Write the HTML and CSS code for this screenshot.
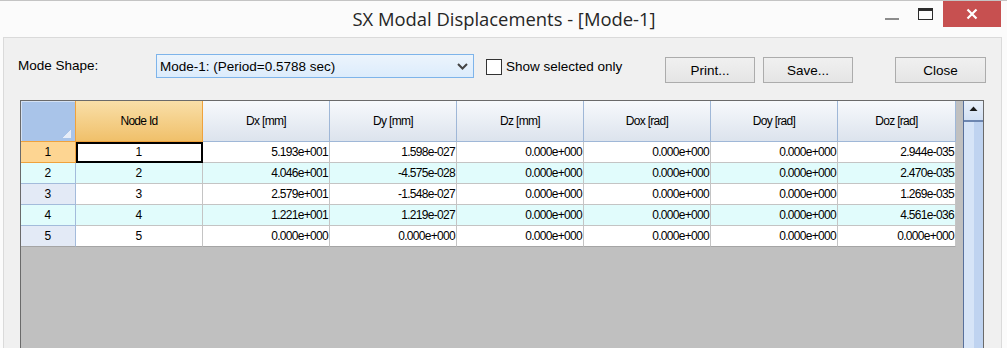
FILE: index.html
```html
<!DOCTYPE html>
<html lang="en">
<head>
    <meta charset="UTF-8">
    <title>SX Modal Displacements - [Mode-1]</title>
    <link rel="stylesheet" href="styles.css">
</head>
<body>

<div class="window">
    <div class="titlebar">
        <div></div>
        <div class="title">SX Modal Displacements - [Mode-1]</div>
        <div class="win-controls">
            <span class="wc-min"></span>
            <span class="wc-max"></span>
            <span class="wc-close">
                <svg width="12" height="12" viewBox="0 0 12 12"><path d="M1.5 1.5 L10.5 10.5 M10.5 1.5 L1.5 10.5" stroke="#fff" stroke-width="2.2" fill="none"/></svg>
            </span>
        </div>
    </div>

    <div class="client">
        <div class="toolbar">
            <div class="field-label">Mode Shape:</div>
            <div class="combo">
                <span>Mode-1: (Period=0.5788 sec)</span>
                <svg class="combo-arrow" width="11" height="7" viewBox="0 0 11 7"><path d="M1 1 L5.5 5.5 L10 1" stroke="#444" stroke-width="2" fill="none"/></svg>
            </div>
            <label class="check">
                <span class="check-box"></span>
                <span>Show selected only</span>
            </label>
            <button class="btn">Print...</button>
            <button class="btn btn-save">Save...</button>
            <button class="btn btn-close">Close</button>
        </div>

        <div class="grid-box">
            <div class="grid-area">
                <table class="grid">
                    <thead>
                        <tr>
                            <th class="corner"></th>
                            <th class="col-sel">Node Id</th>
                            <th>Dx [mm]</th>
                            <th>Dy [mm]</th>
                            <th>Dz [mm]</th>
                            <th>Dox [rad]</th>
                            <th>Doy [rad]</th>
                            <th class="col-last">Doz [rad]</th>
                        </tr>
                    </thead>
                    <tbody>
                        <tr class="sel">
                            <td class="rh">1</td>
                            <td class="id cur">1</td>
                            <td>5.193e+001</td>
                            <td>1.598e-027</td>
                            <td>0.000e+000</td>
                            <td>0.000e+000</td>
                            <td>0.000e+000</td>
                            <td>2.944e-035</td>
                        </tr>
                        <tr class="alt">
                            <td class="rh">2</td>
                            <td class="id">2</td>
                            <td>4.046e+001</td>
                            <td>-4.575e-028</td>
                            <td>0.000e+000</td>
                            <td>0.000e+000</td>
                            <td>0.000e+000</td>
                            <td>2.470e-035</td>
                        </tr>
                        <tr>
                            <td class="rh">3</td>
                            <td class="id">3</td>
                            <td>2.579e+001</td>
                            <td>-1.548e-027</td>
                            <td>0.000e+000</td>
                            <td>0.000e+000</td>
                            <td>0.000e+000</td>
                            <td>1.269e-035</td>
                        </tr>
                        <tr class="alt">
                            <td class="rh">4</td>
                            <td class="id">4</td>
                            <td>1.221e+001</td>
                            <td>1.219e-027</td>
                            <td>0.000e+000</td>
                            <td>0.000e+000</td>
                            <td>0.000e+000</td>
                            <td>4.561e-036</td>
                        </tr>
                        <tr class="last">
                            <td class="rh">5</td>
                            <td class="id">5</td>
                            <td>0.000e+000</td>
                            <td>0.000e+000</td>
                            <td>0.000e+000</td>
                            <td>0.000e+000</td>
                            <td>0.000e+000</td>
                            <td>0.000e+000</td>
                        </tr>
                    </tbody>
                </table>
            </div>

            <!-- vertical scrollbar -->
            <div class="vscroll">
                <div class="vs-btn">
                    <svg width="9" height="5" viewBox="0 0 9 5"><path d="M0.5 5 L4.5 0.5 L8.5 5 Z" fill="#1a1a1a"/></svg>
                </div>
                <div class="vs-track"></div>
            </div>
        </div>
    </div>
</div>

</body>
</html>
```

FILE: styles.css
```css
body {
    margin: 0;
    padding: 0;
    background-color: #fbfbfb;
    font-family: "Liberation Sans", Arial, sans-serif;
    color: #000;
    overflow: hidden;
}

.window {
    width: 1007px;
    height: 348px;
    border-top: 1px solid #c4c4c4;
    box-sizing: border-box;
    display: flex;
    flex-direction: column;
    overflow: hidden;
}

/* title bar */
.titlebar {
    height: 36px;
    flex: none;
    display: grid;
    grid-template-columns: 1fr auto 1fr;
}

.title {
    font-family: "Open Sans", "Noto Sans", sans-serif;
    font-size: 18.4px;
    color: #262626;
    line-height: 36px;
    padding-left: 1px;
}

.win-controls {
    display: flex;
    justify-content: flex-end;
    align-items: flex-start;
    margin-right: 6px;
}

.wc-min {
    width: 14px;
    height: 2px;
    background-color: #8c8c8c;
    margin-top: 17px;
    margin-right: 19px;
}

.wc-max {
    width: 15px;
    height: 12px;
    box-sizing: border-box;
    border: 1px solid #2b2b2b;
    border-top-width: 3px;
    margin-top: 7px;
    margin-right: 10px;
}

.wc-close {
    width: 58px;
    height: 26px;
    background-color: #c75050;
    display: flex;
    align-items: center;
    justify-content: center;
}

/* dialog body */
.client {
    flex: 1;
    margin: 0 5px 0 3px;
    border: 1px solid #dadada;
    border-bottom: none;
    background-color: #f0f0f0;
}

.toolbar {
    display: flex;
    align-items: flex-start;
    padding: 16px 0 0 14px;
    font-size: 13.5px;
}

.field-label {
    width: 138px;
    line-height: 24px;
}

.combo {
    width: 318px;
    height: 24px;
    box-sizing: border-box;
    border: 1px solid #7eb4ea;
    background: linear-gradient(#ecf4fc, #dcecfc);
    display: flex;
    align-items: center;
    justify-content: space-between;
    padding: 0 4px 0 3px;
}

.combo-arrow {
    margin-top: 1px;
    margin-right: 1px;
}

.check {
    width: 179px;
    margin-left: 12px;
    display: flex;
    align-items: center;
    height: 24px;
}

.check-box {
    width: 16px;
    height: 16px;
    box-sizing: border-box;
    border: 1px solid #333;
    background-color: #fff;
    margin-right: 4px;
    margin-top: 1px;
}

.btn {
    width: 90px;
    height: 26px;
    margin-top: 3px;
    padding: 0;
    border: 1px solid #acacac;
    background: linear-gradient(#f0f0f0, #e5e5e5);
    font-family: "Liberation Sans", Arial, sans-serif;
    font-size: 13.5px;
    color: #000;
}

.btn-save {
    margin-left: 8px;
}

.btn-close {
    margin-left: 42px;
    width: 91px;
}

/* data grid */
.grid-box {
    margin: 17px 0 0 16px;
    width: 964px;
    height: 300px;
    box-sizing: border-box;
    border: 1px solid #6a6a6a;
    background-color: #c0c0c0;
    display: flex;
}

.grid-area {
    flex: 1;
}

.grid {
    width: 935px;
    table-layout: fixed;
    border-collapse: separate;
    border-spacing: 0;
    font-family: "Liberation Sans", Arial, sans-serif;
    font-size: 12px;
    letter-spacing: -0.7px;
}

.grid th {
    box-sizing: border-box;
    width: 127px;
    height: 41px;
    padding: 0;
    font-weight: normal;
    background: linear-gradient(#f7f9fc, #dce3ed);
    border-right: 1px solid #9fb7d7;
    border-bottom: 1px solid #9fb7d7;
}

.grid th.corner {
    width: 55px;
    background: linear-gradient(135deg, transparent 50%, #e6edf8 50%) no-repeat right 4px bottom 3px / 8px 8px, #a9c4e9;
    box-shadow: inset 1px 1px #d4e1f3;
    border-right-color: #efa23c;
    border-bottom-color: #efa23c;
}

.grid th.col-sel {
    background: linear-gradient(#f9dfa8, #f0c06a);
    border-right-color: #efa23c;
    border-bottom-color: #efa23c;
}

.grid th.col-last {
    width: 118px;
}

.grid td {
    box-sizing: border-box;
    height: 21px;
    padding: 0 1px 0 0;
    text-align: right;
    background-color: #fff;
    border-right: 1px solid #c4c4c4;
    border-bottom: 1px solid #c4c4c4;
    white-space: nowrap;
}

.grid tr.alt td {
    background-color: #e1fcfc;
}

.grid tr.last td {
    border-bottom-color: #a5a5a5;
}

.grid td.id {
    text-align: center;
}

.grid td.rh {
    text-align: center;
    background-color: #e3eaf6;
    border-right-color: #a3bbdb;
    border-bottom-color: #a3bbdb;
}

.grid tr.sel td.rh {
    background-color: #fdd592;
    border-right-color: #efa23c;
    border-bottom-color: #efa23c;
}

/* focus rectangle on the current cell */
.grid td.cur {
    position: relative;
}

.grid td.cur::after {
    content: "";
    position: absolute;
    top: 0;
    left: 0;
    right: -1px;
    bottom: -1px;
    border: 2px solid #000;
}

.vscroll {
    width: 20px;
    box-sizing: border-box;
    border-left: 1px solid #58709b;
    display: flex;
    flex-direction: column;
}

.vs-btn {
    height: 21px;
    box-sizing: border-box;
    background: linear-gradient(#e9f0fa, #d2e0f4);
    border-bottom: 2px solid #6d86b0;
    display: flex;
    align-items: center;
    justify-content: center;
}

.vs-btn svg {
    margin-top: -4px;
}

.vs-track {
    flex: 1;
    background: linear-gradient(to right, #d6e4f7 50%, #bfd3f0 50%);
}
```
